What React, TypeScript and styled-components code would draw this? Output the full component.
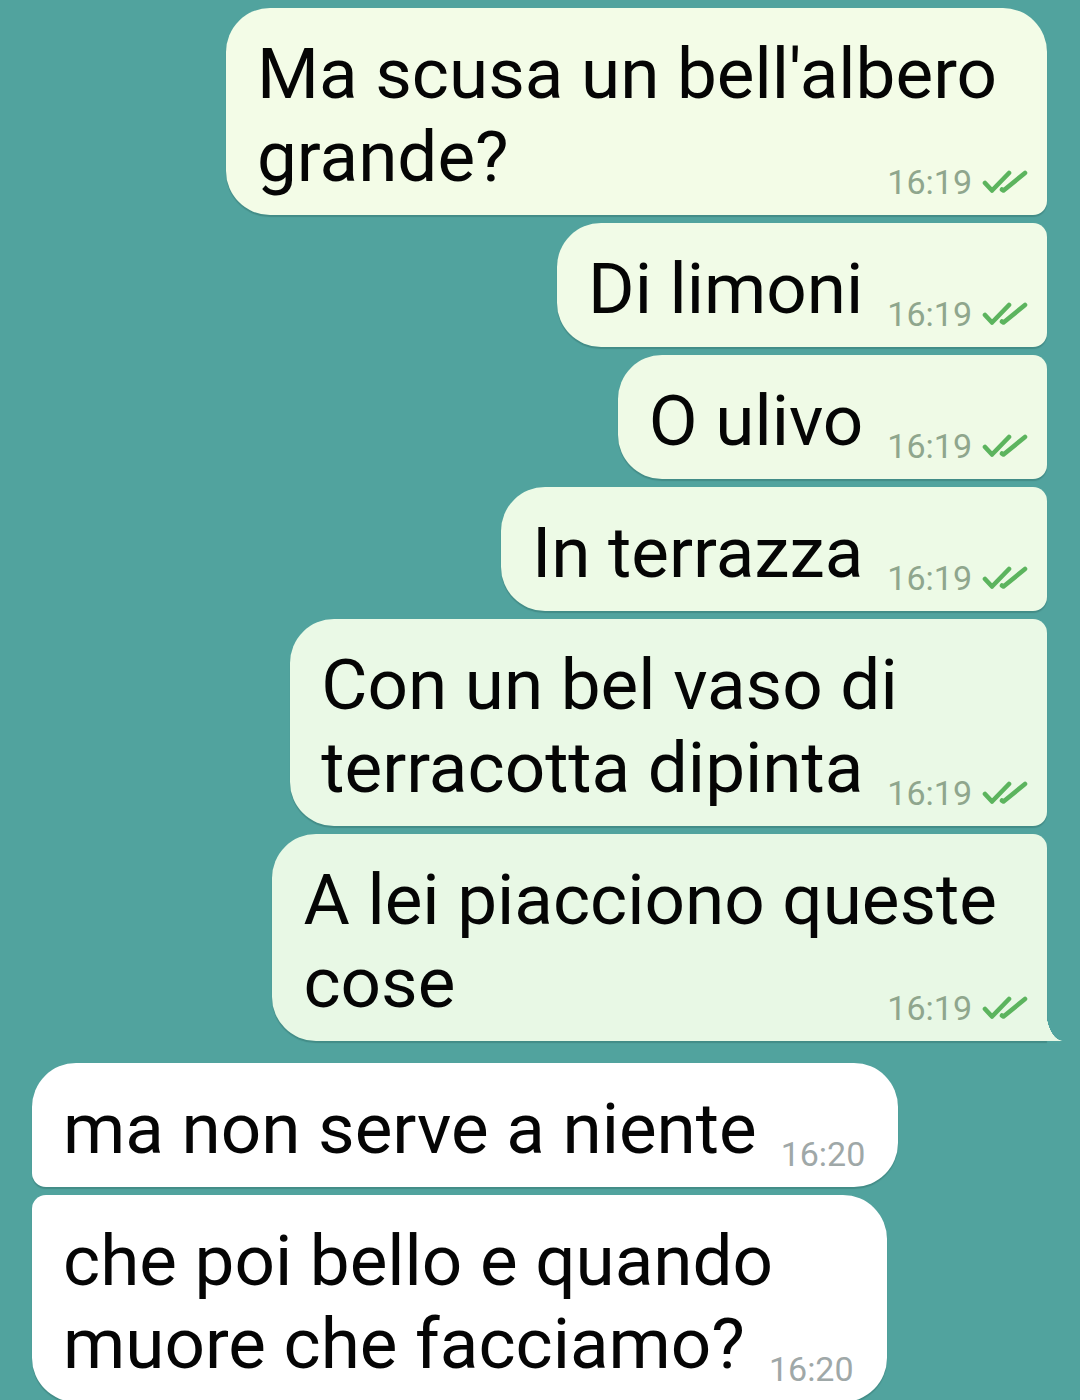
import styled, { createGlobalStyle } from 'styled-components';

type Message = {
  id: number;
  lines: string[];
  time: string;
  tint?: string;
};

const sent: Message[] = [
  { id: 1, lines: ["Ma scusa un bell'albero", 'grande?'], time: '16:19', tint: '#f3fce7' },
  { id: 2, lines: ['Di limoni'], time: '16:19', tint: '#f1fbe7' },
  { id: 3, lines: ['O ulivo'], time: '16:19', tint: '#effae6' },
  { id: 4, lines: ['In terrazza'], time: '16:19', tint: '#edfae6' },
  { id: 5, lines: ['Con un bel vaso di', 'terracotta dipinta'], time: '16:19', tint: '#eaf9e6' },
  { id: 6, lines: ['A lei piacciono queste', 'cose'], time: '16:19', tint: '#e8f8e5' },
];

const received: Message[] = [
  { id: 7, lines: ['ma non serve a niente'], time: '16:20' },
  { id: 8, lines: ['che poi bello e quando', 'muore che facciamo?'], time: '16:20' },
];

const GlobalStyle = createGlobalStyle`
  html, body {
    margin: 0;
    padding: 0;
    background: #51a39e;
  }
  body {
    font-family: Roboto, "Noto Sans", sans-serif;
  }
`;

const DoubleTick = () => (
  <svg width="46" height="26" viewBox="0 0 46 26" fill="none">
    <path
      d="M3 14 L10 21.5 L27 4"
      stroke="#5cb45e"
      strokeWidth="4.6"
      strokeLinecap="round"
      strokeLinejoin="round"
    />
    <path
      d="M20 20.5 L21.5 21.5 L43 4"
      stroke="#5cb45e"
      strokeWidth="4.6"
      strokeLinecap="round"
      strokeLinejoin="round"
    />
  </svg>
);

const Bubble = ({
  message,
  out,
  first,
  last,
}: {
  message: Message;
  out: boolean;
  first: boolean;
  last: boolean;
}) => {
  const head = message.lines.slice(0, -1);
  const tail = message.lines[message.lines.length - 1];
  return (
    <BubbleBox $out={out} $first={first} $last={last} $tint={message.tint ?? '#ffffff'}>
      {head.map((line) => (
        <Line key={line}>{line}</Line>
      ))}
      <LastRow>
        <LastLine>{tail}</LastLine>
        <Meta>
          <Time $out={out}>{message.time}</Time>
          {out && <DoubleTick />}
        </Meta>
      </LastRow>
    </BubbleBox>
  );
};

const App = () => {
  return (
    <>
      <GlobalStyle />
      <Screen>
        <Group $out={true}>
          {sent.map((m, i) => (
            <Bubble
              key={m.id}
              message={m}
              out={true}
              first={i === 0}
              last={i === sent.length - 1}
            />
          ))}
        </Group>
        <Group $out={false}>
          {received.map((m, i) => (
            <Bubble
              key={m.id}
              message={m}
              out={false}
              first={i === 0}
              last={i === received.length - 1}
            />
          ))}
        </Group>
      </Screen>
    </>
  );
};

const Screen = styled.div`
  width: 1080px;
  height: 1400px;
  overflow: hidden;
  box-sizing: border-box;
  padding: 8px 33px 0 32px;
  display: flex;
  flex-direction: column;
  gap: 22px;
`;

const Group = styled.div<{ $out: boolean }>`
  display: flex;
  flex-direction: column;
  align-items: ${(p) => (p.$out ? 'flex-end' : 'flex-start')};
  gap: 8px;
`;

const BubbleBox = styled.div<{ $out: boolean; $first: boolean; $last: boolean; $tint: string }>`
  position: relative;
  box-sizing: border-box;
  padding: 24px ${(p) => (p.$out ? 19 : 33)}px 17px 31px;
  background: ${(p) => p.$tint};
  color: #050505;
  box-shadow: 0 2px 1px rgba(0, 40, 36, 0.18);
  border-radius: ${(p) =>
    p.$out
      ? `44px ${p.$first ? 44 : 14}px ${p.$last ? 0 : 14}px 44px`
      : `${p.$first ? 44 : 14}px 44px 44px ${p.$last ? 44 : 14}px`};

  ${(p) =>
    p.$out &&
    p.$last &&
    `
    &::after {
      content: '';
      position: absolute;
      right: -16px;
      bottom: 0;
      width: 17px;
      height: 32px;
      background: radial-gradient(ellipse 17px 32px at 100% 0, transparent 98%, ${p.$tint} 100%);
      border-bottom-right-radius: 3px;
    }
  `}
`;

const Line = styled.div`
  font-size: 71px;
  line-height: 83px;
  white-space: nowrap;
  padding-right: 31px;
`;

const LastRow = styled.div`
  display: flex;
  align-items: flex-end;
`;

const LastLine = styled.div`
  font-size: 71px;
  line-height: 83px;
  white-space: nowrap;
  flex: 1 0 auto;
`;

const Meta = styled.div`
  display: flex;
  align-items: center;
  gap: 10px;
  margin-left: 24px;
  margin-bottom: -1px;
`;

const Time = styled.span<{ $out: boolean }>`
  font-size: 34px;
  line-height: 34px;
  color: ${(p) => (p.$out ? '#8fa68d' : '#9fa8a8')};
`;

export default App;
